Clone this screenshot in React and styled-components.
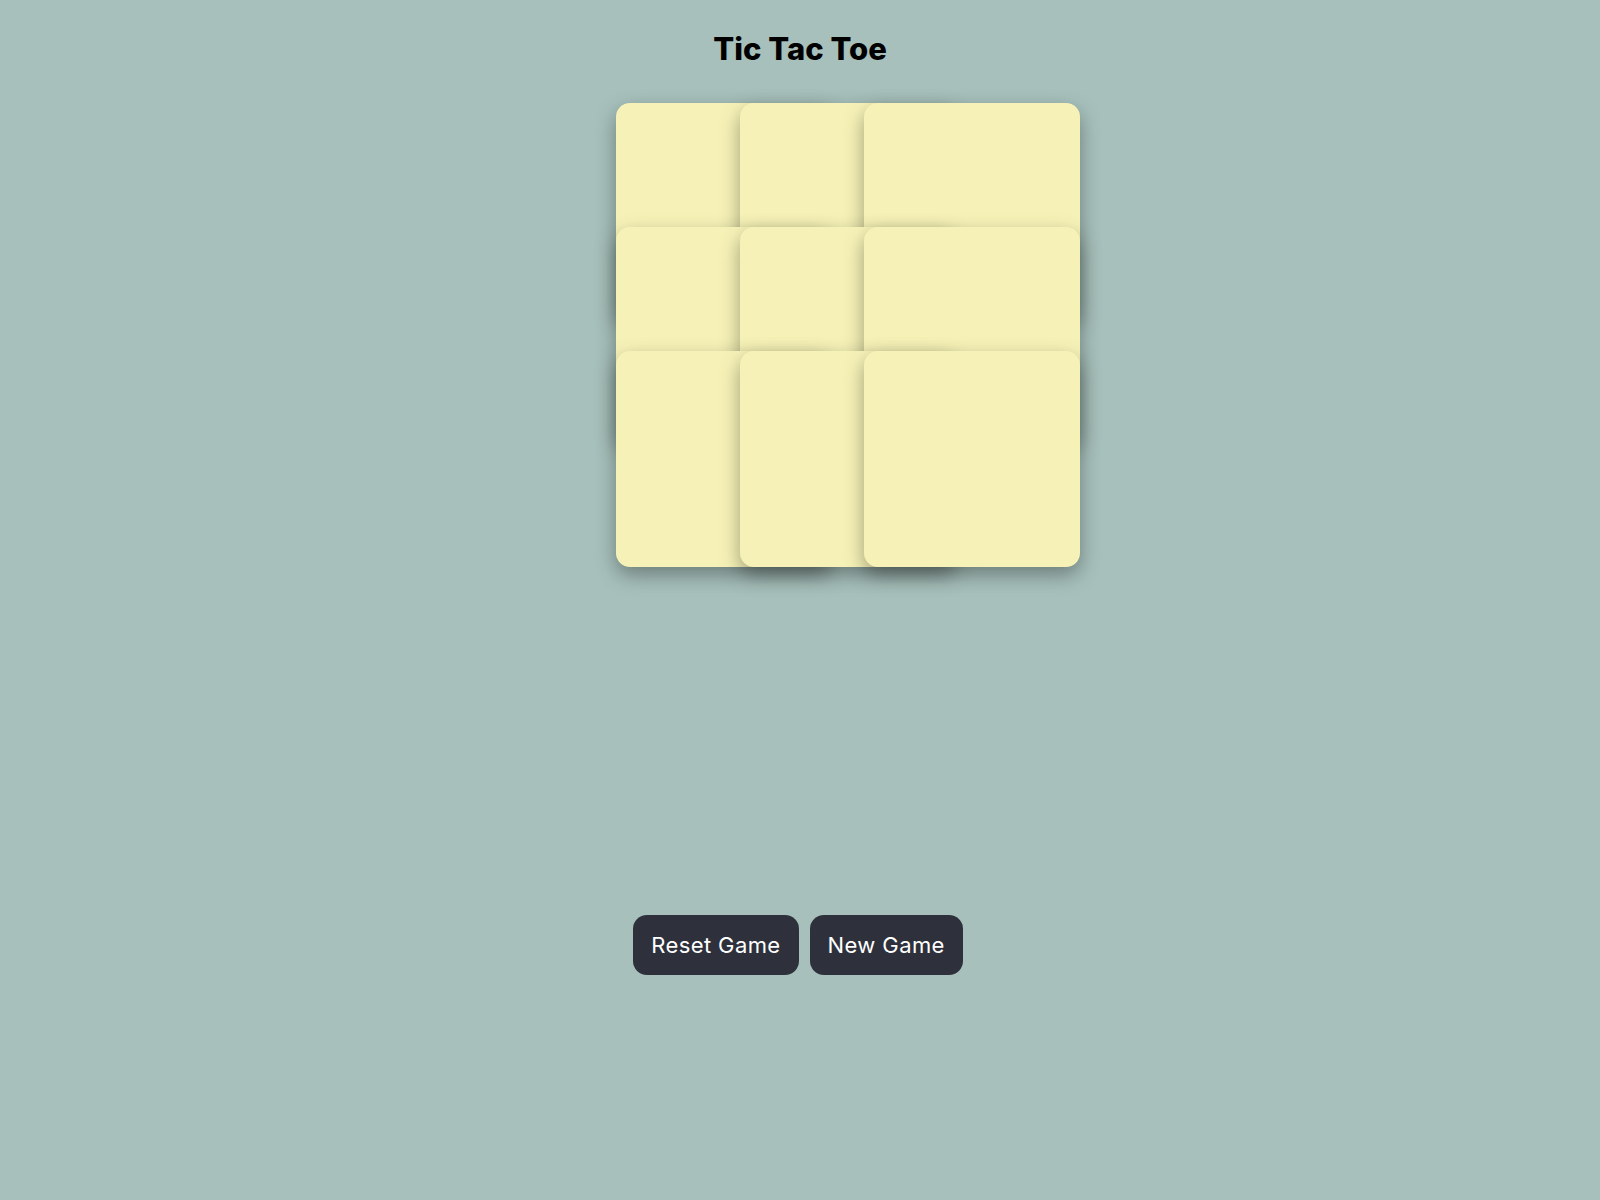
import React from 'react';
import styled, { createGlobalStyle } from 'styled-components';

const GlobalStyle = createGlobalStyle`
	body {
		margin: 0;
		background-color: #a7c0bb;
		font-family: 'Inter', 'Liberation Sans', sans-serif;
	}
`;

const Page = styled.div`
	display: flex;
	flex-direction: column;
	align-items: center;
	min-height: 100vh;
`;

const Title = styled.h1`
	margin: 30px 0 0;
	font-size: 31px;
	font-weight: 800;
	line-height: 38px;
	color: #000;
`;

const Board = styled.div`
	display: grid;
	grid-template-columns: repeat(3, 120px);
	grid-auto-rows: 120px;
	gap: 4px;
	width: 368px;
	margin-top: 35px;
`;

const Cell = styled.div`
	width: 216px;
	height: 216px;
	border-radius: 14px;
	background-color: #f6f2b7;
	box-shadow: 0 8px 20px rgba(0, 0, 0, 0.35);
`;

const Controls = styled.div`
	display: flex;
	gap: 11px;
	margin-top: 444px;
	padding-right: 4px;
`;

const Button = styled.button`
	height: 60px;
	padding: 0 18px;
	border: none;
	border-radius: 14px;
	background-color: #2e313b;
	color: #fff;
	font-family: 'Inter', 'Liberation Sans', sans-serif;
	font-size: 22px;
	letter-spacing: 0.4px;
	cursor: pointer;
`;

const cells = Array.from({ length: 9 }, (_, i) => i);

const App = () => (
	<Page>
		<GlobalStyle />
		<Title>Tic Tac Toe</Title>
		<Board>
			{cells.map((i) => (
				<Cell key={i} />
			))}
		</Board>
		<Controls>
			<Button type="button">Reset Game</Button>
			<Button type="button">New Game</Button>
		</Controls>
	</Page>
);

export default App;
